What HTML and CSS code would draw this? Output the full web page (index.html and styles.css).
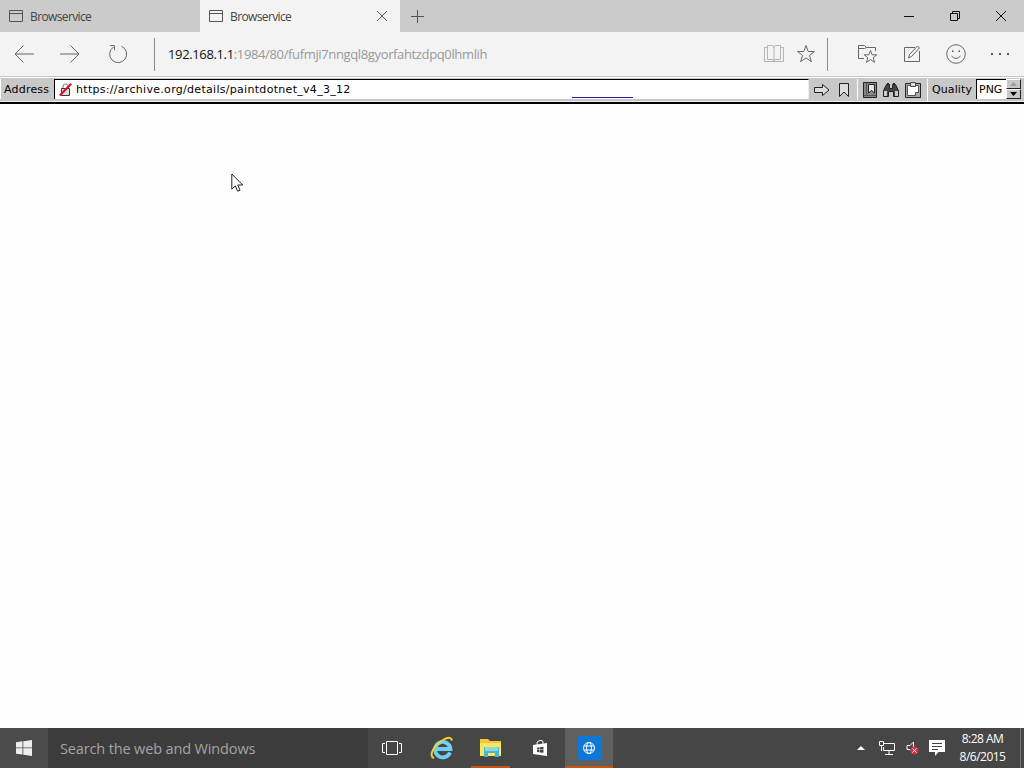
FILE: index.html
```html
<!DOCTYPE html>
<html lang="en">
<head>
    <meta charset="UTF-8">
    <title>Browservice</title>
    <link rel="stylesheet" href="styles.css">
</head>
<body>
    <div class="tabs">
        <div class="tab">
            <svg class="tab-icon" width="14" height="12" viewBox="0 0 14 12"><path d="M.5.5h13v11H.5zM.5 3.500h13"/></svg>
            <span class="tab-title">Browservice</span>
        </div>
        <div class="tab active">
            <svg class="tab-icon" width="14" height="12" viewBox="0 0 14 12"><path d="M.5.5h13v11H.5zM.5 3.500h13"/></svg>
            <span class="tab-title">Browservice</span>
            <svg class="tab-close" width="10" height="10" viewBox="0 0 10 10"><path d="M0 0l10 10M10 0L0 10"/></svg>
        </div>
        <svg class="new-tab" width="13" height="13" viewBox="0 0 13 13"><path d="M6.500 0v13M0 6.500h13"/></svg>
        <div class="window-buttons">
            <svg width="46" height="32" viewBox="0 0 46 32"><path d="M18 16.500h10"/></svg>
            <svg width="46" height="32" viewBox="0 0 46 32"><path d="M18.500 13.500h7v7h-7zM20.500 13.500v-2h7v7h-2"/></svg>
            <svg width="46" height="32" viewBox="0 0 46 32"><path d="M18 11l10 10M28 11L18 21"/></svg>
        </div>
    </div>

    <div class="nav">
        <svg class="back" width="20" height="18" viewBox="0 0 20 18"><path d="M20 9H1M9.500.5L1 9l8.500 8.500"/></svg>
        <svg class="forward" width="20" height="18" viewBox="0 0 20 18"><path d="M0 9h19M10.500.5L19 9l-8.500 8.500"/></svg>
        <svg class="refresh" width="20" height="20" viewBox="0 0 20 20"><path d="M13.500 2.300A8.500 8.500 0 1 1 5.500 3M2 1.600h4.500v4.600"/></svg>
        <span class="line"></span>
        <div class="url"><b>192.168.1.1</b>:1984/80/fufmji7nngql8gyorfahtzdpq0lhmlih</div>
        <svg class="book" width="20" height="18" viewBox="0 0 20 18"><path d="M3.500.5H8q2 0 2 2 0-2 2-2h4.500v14H12q-2 0-2 2 0-2-2-2H3.500zM10 2v15M3 2.500H.5v14H19.500v-14H17"/></svg>
        <svg class="star" width="20" height="20" viewBox="0 0 20 20"><path d="M10 1.500l2.200 6h6.300l-5 3.900 1.900 6.300-5.400-3.800-5.400 3.800 1.900-6.300-5-3.900h6.300z"/></svg>
        <span class="line"></span>
        <svg class="hub" width="20" height="20" viewBox="0 0 20 20"><path d="M6 14.500H.5v-13h6l2 2H17.500V7M.5 4.500h6l2-1M12.500 6.500l1.700 4.300h4.600l-3.600 2.900 1.300 4.600-4-2.700-4 2.700 1.300-4.600-3.600-2.900h4.600z"/></svg>
        <svg class="note" width="18" height="18" viewBox="0 0 18 18"><path d="M12 2.500H1.500v14h15V6M5.500 13l1-3.500L14.500 1l2 2-8 8.500z"/></svg>
        <svg class="smile" width="20" height="20" viewBox="0 0 20 20"><circle cx="10" cy="10" r="9.300"/><path d="M5.500 12q4.500 5 9 0"/><path class="solid" d="M6 6.500h1.500V8H6zM12.500 6.500H14V8h-1.500z"/></svg>
        <svg class="more" width="20" height="4" viewBox="0 0 20 4"><path class="solid" d="M1 1h2v2H1zM9 1h2v2H9zM17 1h2v2h-2z"/></svg>
    </div>

    <div class="service-bar">
        <div class="address-label">Address</div>
        <div class="address-field">
            <svg class="lock" width="13" height="13" viewBox="0 0 13 13"><path d="M2.500 5.500h8v7h-8z" fill="#ddd" stroke="#333"/><path d="M4 5V3q0-2 2.500-2T9 3v2" fill="none" stroke="#777"/><path d="M.8 12.500L12.200.8" stroke="#d4182c" stroke-width="2.200"/></svg>
            <span class="address">https://archive.org/details/paintdotnet_v4_3_12</span>
            <span class="progress"></span>
        </div>
        <div class="tools go">
            <svg width="16" height="14" viewBox="0 0 16 14"><path d="M.5 4.500h8v-3L15 7l-6.500 5.500v-3h-8z" fill="#ddd"/></svg>
            <svg width="12" height="16" viewBox="0 0 12 16"><path d="M1.500 1.500h9v13L6 10l-4.500 4.500z" fill="#ddd"/></svg>
        </div>
        <div class="tools">
            <svg width="14" height="16" viewBox="0 0 14 16"><path d="M.5.5h13v15H.5z" fill="#888"/><path d="M3.500 1v12M1 13.500h12" stroke="#555"/><path d="M5.500 2.500h6V11l-3-2.500-3 2.500z" fill="#e5e5e5"/></svg>
            <svg width="18" height="16" viewBox="0 0 18 16"><path d="M4.500 2.500h3v4h3v-4h3l3 6v6h-5v-5h-5v5h-5v-6z" fill="#444"/><path d="M5 1.500h2M11 1.500h2"/><path d="M2 9h3v5H2zM13 9h3v5h-3z" fill="#ccc" stroke="none"/></svg>
            <svg width="16" height="16" viewBox="0 0 16 16"><path d="M.5 1.500h15v14H.5z" fill="#aaa"/><path d="M2.500 3.500h11v7l-3 3h-8z" fill="#fff" stroke="#555"/><path d="M13.500 10.500h-3v3M5.500.5h5v4h-5z" fill="#ddd" stroke="#444"/></svg>
        </div>
        <div class="quality">
            <span class="quality-label">Quality</span>
            <div class="quality-value">PNG</div>
            <div class="spin">
                <span><svg width="7" height="4" viewBox="0 0 7 4"><path d="M0 4L3.500 0 7 4z" fill="#999"/></svg></span>
                <span><svg width="7" height="4" viewBox="0 0 7 4"><path d="M0 0h7L3.500 4z" fill="#000"/></svg></span>
            </div>
        </div>
    </div>

    <div class="page">
        <svg class="cursor" width="13" height="20" viewBox="0 0 13 20"><path d="M.8 1v15.200l3.500-3.300 2.300 5.300 2.400-1-2.300-5.200h5z" fill="#fff" stroke="#222"/></svg>
    </div>

    <div class="taskbar">
        <div class="start">
            <svg width="16" height="16" viewBox="0 0 16 16"><path d="M0 2.200L6.500 1.300v6.200H0zM7.300 1.200L16 0v7.500H7.300zM0 8.300h6.500v6.300L0 13.700zM7.300 8.300H16V16l-8.700-1.200z" fill="#eee"/></svg>
        </div>
        <div class="search">Search the web and Windows</div>
        <div class="app">
            <svg width="20" height="16" viewBox="0 0 20 16"><path d="M4.500 1.500h11v13h-11zM3 3.500H.5v9H3M17 3.500h2.500v9H17" fill="none" stroke="#fff"/></svg>
        </div>
        <div class="app">
            <svg width="24" height="24" viewBox="0 0 24 24"><path d="M20 16.500A7.700 7.700 0 1 1 20.500 13H6" fill="none" stroke="#6fd0f7" stroke-width="3.800"/><path d="M4 22C-2 20 4 9 13 4q8-4.500 9 .5" fill="none" stroke="#f5d32f" stroke-width="2"/></svg>
        </div>
        <div class="app open explorer">
            <svg width="22" height="20" viewBox="0 0 22 20"><path d="M0 1h8l2 2h11v15H0z" fill="#f2c640"/><path d="M0 5h21v13H0z" fill="#fbe65e"/><path d="M4 9h15v10h-4v-4H8v4H4z" fill="#45b5e0"/><path d="M5 9h13v4H5z" fill="#8bdcd8"/></svg>
        </div>
        <div class="app">
            <svg width="16" height="16" viewBox="0 0 16 16"><path d="M1 5l14-2v13L1 14z" fill="#fff"/><path d="M5 5V3q0-2 3-2.500T11 2v2" fill="none" stroke="#fff"/><path d="M5 7.700l2.500-.4v2.200H5zM8 7.200l3.500-.5v2.800H8zM5 10h2.500v2.300L5 12zM8 10h3.500v2.800L8 12.400z" fill="#444"/></svg>
        </div>
        <div class="app open current">
            <svg width="24" height="24" viewBox="0 0 24 24"><path d="M0 0h24v24H0z" fill="#0f78d4"/><g fill="none" stroke="#fff"><circle cx="12" cy="12" r="5.500"/><ellipse cx="12" cy="12" rx="2.500" ry="5.500"/><path d="M7 10h10M7 14h10"/></g></svg>
        </div>
        <div class="tray">
            <svg class="tray-up" width="8" height="4" viewBox="0 0 8 4"><path d="M0 4l4-4 4 4z" fill="#fff"/></svg>
            <svg class="tray-network" width="16" height="14" viewBox="0 0 16 14"><path d="M5 2.500h10.500v7H4.500V6M10 10v3M6 13.500h8M.5.500h4v4h-4zM2.500 5v5" fill="none" stroke="#fff"/></svg>
            <svg class="tray-volume" width="13" height="14" viewBox="0 0 13 14"><path d="M7.500 6V1L4 4.500H1v4h3l2 2" fill="none" stroke="#fff"/><circle cx="8.500" cy="9.500" r="4" fill="#d5303f"/><path d="M6.500 7.500l4 4M10.500 7.500l-4 4" stroke="#fff"/></svg>
            <svg class="tray-action" width="16" height="16" viewBox="0 0 16 16"><path d="M0 0h16v12H9.500L6 16v-4H0z" fill="#fff"/><path d="M3 3.500h10M3 6.500h10M3 9.500h6" stroke="#444"/></svg>
            <div class="clock">8:28 AM<br>8/6/2015</div>
        </div>
    </div>
</body>
</html>
```
FILE: styles.css
```css
* {
    margin: 0;
    padding: 0;
    box-sizing: border-box;
}

body {
    width: 1024px;
    height: 768px;
    display: flex;
    flex-direction: column;
    background: #fefefe;
    font-family: "Open Sans", "Noto Sans", sans-serif;
    overflow: hidden;
}

svg {
    display: block;
    flex: none;
}

/* tab strip */
.tabs {
    display: flex;
    align-items: center;
    height: 32px;
    background: #cbcbcb;
    fill: none;
    stroke: #555;
}

.tab {
    display: flex;
    align-items: center;
    width: 200px;
    height: 32px;
    padding: 0 13px 0 9px;
}

.tab.active {
    background: #f3f3f3;
}

.tab-title {
    flex: 1;
    margin-left: 7px;
    padding-top: 1px;
    font-size: 12px;
    letter-spacing: -0.62px;
    color: #444;
}

.new-tab {
    margin-left: 11px;
}

.window-buttons {
    display: flex;
    margin-left: auto;
    stroke: #111;
}

/* navigation */
.nav {
    display: flex;
    align-items: center;
    height: 44px;
    padding-left: 14px;
    background: #f3f3f3;
    fill: none;
    stroke: #666;
}

.nav .solid {
    fill: #555;
    stroke: none;
}

.forward {
    margin-left: 26px;
}

.refresh {
    margin-left: 28px;
}

.line {
    width: 1px;
    height: 33px;
    margin-left: 26px;
    background: #8c8c8c;
}

.url {
    width: 596px;
    margin-left: 13px;
    font-size: 13px;
    letter-spacing: -0.36px;
    color: #999;
    white-space: nowrap;
}

.url b {
    font-weight: normal;
    color: #111;
}

.book {
    stroke: #b5b5b5;
}

.star {
    margin-left: 12px;
}

.star + .line {
    margin-left: 11px;
}

.hub {
    margin-left: 30px;
}

.note {
    margin-left: 25px;
}

.smile {
    margin-left: 25px;
}

.more {
    margin-left: 24px;
}

/* Browservice bar */
.service-bar {
    display: flex;
    height: 28px;
    padding: 2px 0 3px;
    background: #c8c8c8;
    border-top: 1px solid #c4c4c4;
    border-bottom: 2px solid #000;
    box-shadow: inset 0 1px #fff, inset 0 -1px #eee;
    font-family: "DejaVu Sans", sans-serif;
    font-size: 11px;
    line-height: 21px;
    color: #000;
}

.address-label {
    width: 54px;
    padding-left: 3px;
    border-left: 1px solid #fff;
    letter-spacing: 0.2px;
}

.address-field {
    position: relative;
    display: flex;
    align-items: center;
    width: 755px;
    height: 20px;
    padding-left: 4px;
    background: #fff;
    border: solid #000;
    border-width: 1px 0 0 1px;
    border-right: 1px solid #eee;
}

.address {
    margin-left: 4px;
    letter-spacing: 0.3px;
    white-space: nowrap;
}

.progress {
    position: absolute;
    left: 517px;
    bottom: 1px;
    width: 61px;
    height: 1px;
    background: #1c1ca0;
}

.tools {
    display: flex;
    align-items: center;
    gap: 5px;
    width: 70px;
    height: 21px;
    padding-left: 5px;
    border-left: 1px solid #fff;
    fill: none;
    stroke: #222;
}

.tools.go {
    gap: 8px;
    width: 48px;
    padding-left: 5px;
    border-left: 0;
}

.quality {
    display: flex;
    width: 97px;
    height: 22px;
    padding-left: 4px;
    border-left: 1px solid #fff;
}

.quality-label {
    width: 44px;
    letter-spacing: 0.1px;
}

.quality-value {
    width: 30px;
    height: 20px;
    padding-left: 2px;
    background: #fff;
    border: solid #000;
    border-width: 1px 0 0 1px;
    line-height: 19px;
}

.spin {
    display: flex;
    flex-direction: column;
}

.spin span {
    display: flex;
    align-items: center;
    justify-content: center;
    width: 15px;
    height: 10px;
    background: #c8c8c8;
    border: 1px solid #fff;
    border-right-color: #222;
    border-bottom-color: #222;
}

.page {
    position: relative;
    flex: 1;
}

.cursor {
    position: absolute;
    left: 231px;
    top: 69px;
}

/* taskbar */
.taskbar {
    display: flex;
    height: 40px;
    background: #464646;
}

.start {
    display: flex;
    align-items: center;
    justify-content: center;
    width: 48px;
    background: #4b4b4b;
}

.search {
    width: 320px;
    padding-left: 12px;
    background: #3c3c3c;
    color: #a3a3a3;
    font-size: 14.5px;
    letter-spacing: -0.14px;
    line-height: 41px;
    white-space: nowrap;
}

.app {
    display: flex;
    align-items: center;
    justify-content: center;
    width: 48px;
    height: 40px;
    margin-right: 2px;
}

.app.open {
    border-bottom: 2px solid #c9540c;
    padding-top: 2px;
}

.app.explorer {
    width: 39px;
    margin: 0 6px 0 3px;
}

.app.current {
    margin-left: -1px;
    background: #606060;
}

.tray {
    display: flex;
    align-items: center;
    margin-left: auto;
    border-right: 1px solid #777;
    margin-right: 3px;
}

.tray-network {
    margin-left: 14px;
}

.tray-volume {
    margin-left: 11px;
}

.tray-action {
    margin-left: 10px;
}

.clock {
    width: 75px;
    color: #fff;
    font-size: 12px;
    letter-spacing: -0.5px;
    line-height: 18px;
    text-align: center;
}
```
